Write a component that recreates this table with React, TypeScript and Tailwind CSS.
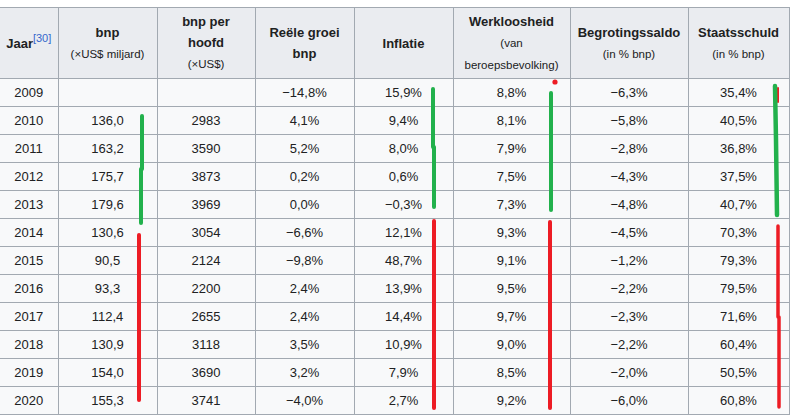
import React from "react";

const rows: string[][] = [
	["2009", "", "", "−14,8%", "15,9%", "8,8%", "−6,3%", "35,4%"],
	["2010", "136,0", "2983", "4,1%", "9,4%", "8,1%", "−5,8%", "40,5%"],
	["2011", "163,2", "3590", "5,2%", "8,0%", "7,9%", "−2,8%", "36,8%"],
	["2012", "175,7", "3873", "0,2%", "0,6%", "7,5%", "−4,3%", "37,5%"],
	["2013", "179,6", "3969", "0,0%", "−0,3%", "7,3%", "−4,8%", "40,7%"],
	["2014", "130,6", "3054", "−6,6%", "12,1%", "9,3%", "−4,5%", "70,3%"],
	["2015", "90,5", "2124", "−9,8%", "48,7%", "9,1%", "−1,2%", "79,3%"],
	["2016", "93,3", "2200", "2,4%", "13,9%", "9,5%", "−2,2%", "79,5%"],
	["2017", "112,4", "2655", "2,4%", "14,4%", "9,7%", "−2,3%", "71,6%"],
	["2018", "130,9", "3118", "3,5%", "10,9%", "9,0%", "−2,2%", "60,4%"],
	["2019", "154,0", "3690", "3,2%", "7,9%", "8,5%", "−2,0%", "50,5%"],
	["2020", "155,3", "3741", "−4,0%", "2,7%", "9,2%", "−6,0%", "60,8%"],
];

const th = "border border-[#a2a9b1] bg-[#eaecf0] font-bold text-center align-middle px-1 leading-[21px]";
const td = "border border-[#a2a9b1] bg-[#f8f9fa] text-center align-middle px-1";
const small = "font-normal text-[11.5px]";

function Marks() {
	// hand drawn marker strokes over the table
	return (
		<svg className="absolute left-0 top-0 pointer-events-none" width="800" height="419" viewBox="0 0 800 419">
			<g fill="none" strokeLinecap="round" strokeWidth="4">
				<path d="M142 116 L142 169 M141 169 L141 223" stroke="#22b14c" />
				<path d="M139 235 L139 400" stroke="#ed1c24" />
				<path d="M433 89 L433 147 M434 147 L434 207" stroke="#22b14c" />
				<path d="M434 221 L434 408" stroke="#ed1c24" />
				<path d="M551 93 L551 210" stroke="#22b14c" />
				<path d="M550 222 L550 408" stroke="#ed1c24" />
				<path d="M778 226 L778 317 M779 317 L779 407" stroke="#ed1c24" strokeWidth="3.5" />
				<path d="M778 88 L778 102 M775 134 L775 148 M777 168 L777 184 M776 200 L776 212" stroke="#ed1c24" strokeWidth="2" />
				<path d="M775 86 L776 140 L777 215" stroke="#22b14c" strokeWidth="4.5" />
			</g>
			<circle cx="555" cy="82" r="2.6" fill="#ed1c24" />
		</svg>
	);
}

export default function App() {
	return (
		<div className="relative w-[800px] h-[419px] bg-white overflow-hidden" style={{ fontFamily: '"Liberation Sans", Arial, sans-serif' }}>
			<table className="table-fixed border-collapse mt-[7px] text-[13px] text-[#202122] w-[789px]">
				<colgroup>
					<col className="w-[58px]" />
					<col className="w-[99px]" />
					<col className="w-[98px]" />
					<col className="w-[99px]" />
					<col className="w-[99px]" />
					<col className="w-[117px]" />
					<col className="w-[118px]" />
					<col className="w-[101px]" />
				</colgroup>
				<thead>
					<tr className="h-[71px]">
						<th className={th + " border-l-0"}>
							Jaar<sup className="text-[#3366cc] font-normal text-[11px]">[30]</sup>
						</th>
						<th className={th}>
							bnp<br />
							<span className={small}>(×US$ miljard)</span>
						</th>
						<th className={th}>
							bnp per<br />hoofd<br />
							<span className={small}>(×US$)</span>
						</th>
						<th className={th}>
							Reële groei<br />bnp
						</th>
						<th className={th}>Inflatie</th>
						<th className={th}>
							Werkloosheid<br />
							<span className={small}>(van<br />beroepsbevolking)</span>
						</th>
						<th className={th}>
							Begrotingssaldo<br />
							<span className={small}>(in % bnp)</span>
						</th>
						<th className={th}>
							Staatsschuld<br />
							<span className={small}>(in % bnp)</span>
						</th>
					</tr>
				</thead>
				<tbody>
					{rows.map((r, i) => (
						<tr key={i} className="h-[28px]">
							{r.map((c, j) => (
								<td key={j} className={td + (j === 0 ? " border-l-0" : "")}>
									{c}
								</td>
							))}
						</tr>
					))}
				</tbody>
			</table>
			<Marks />
		</div>
	);
}
